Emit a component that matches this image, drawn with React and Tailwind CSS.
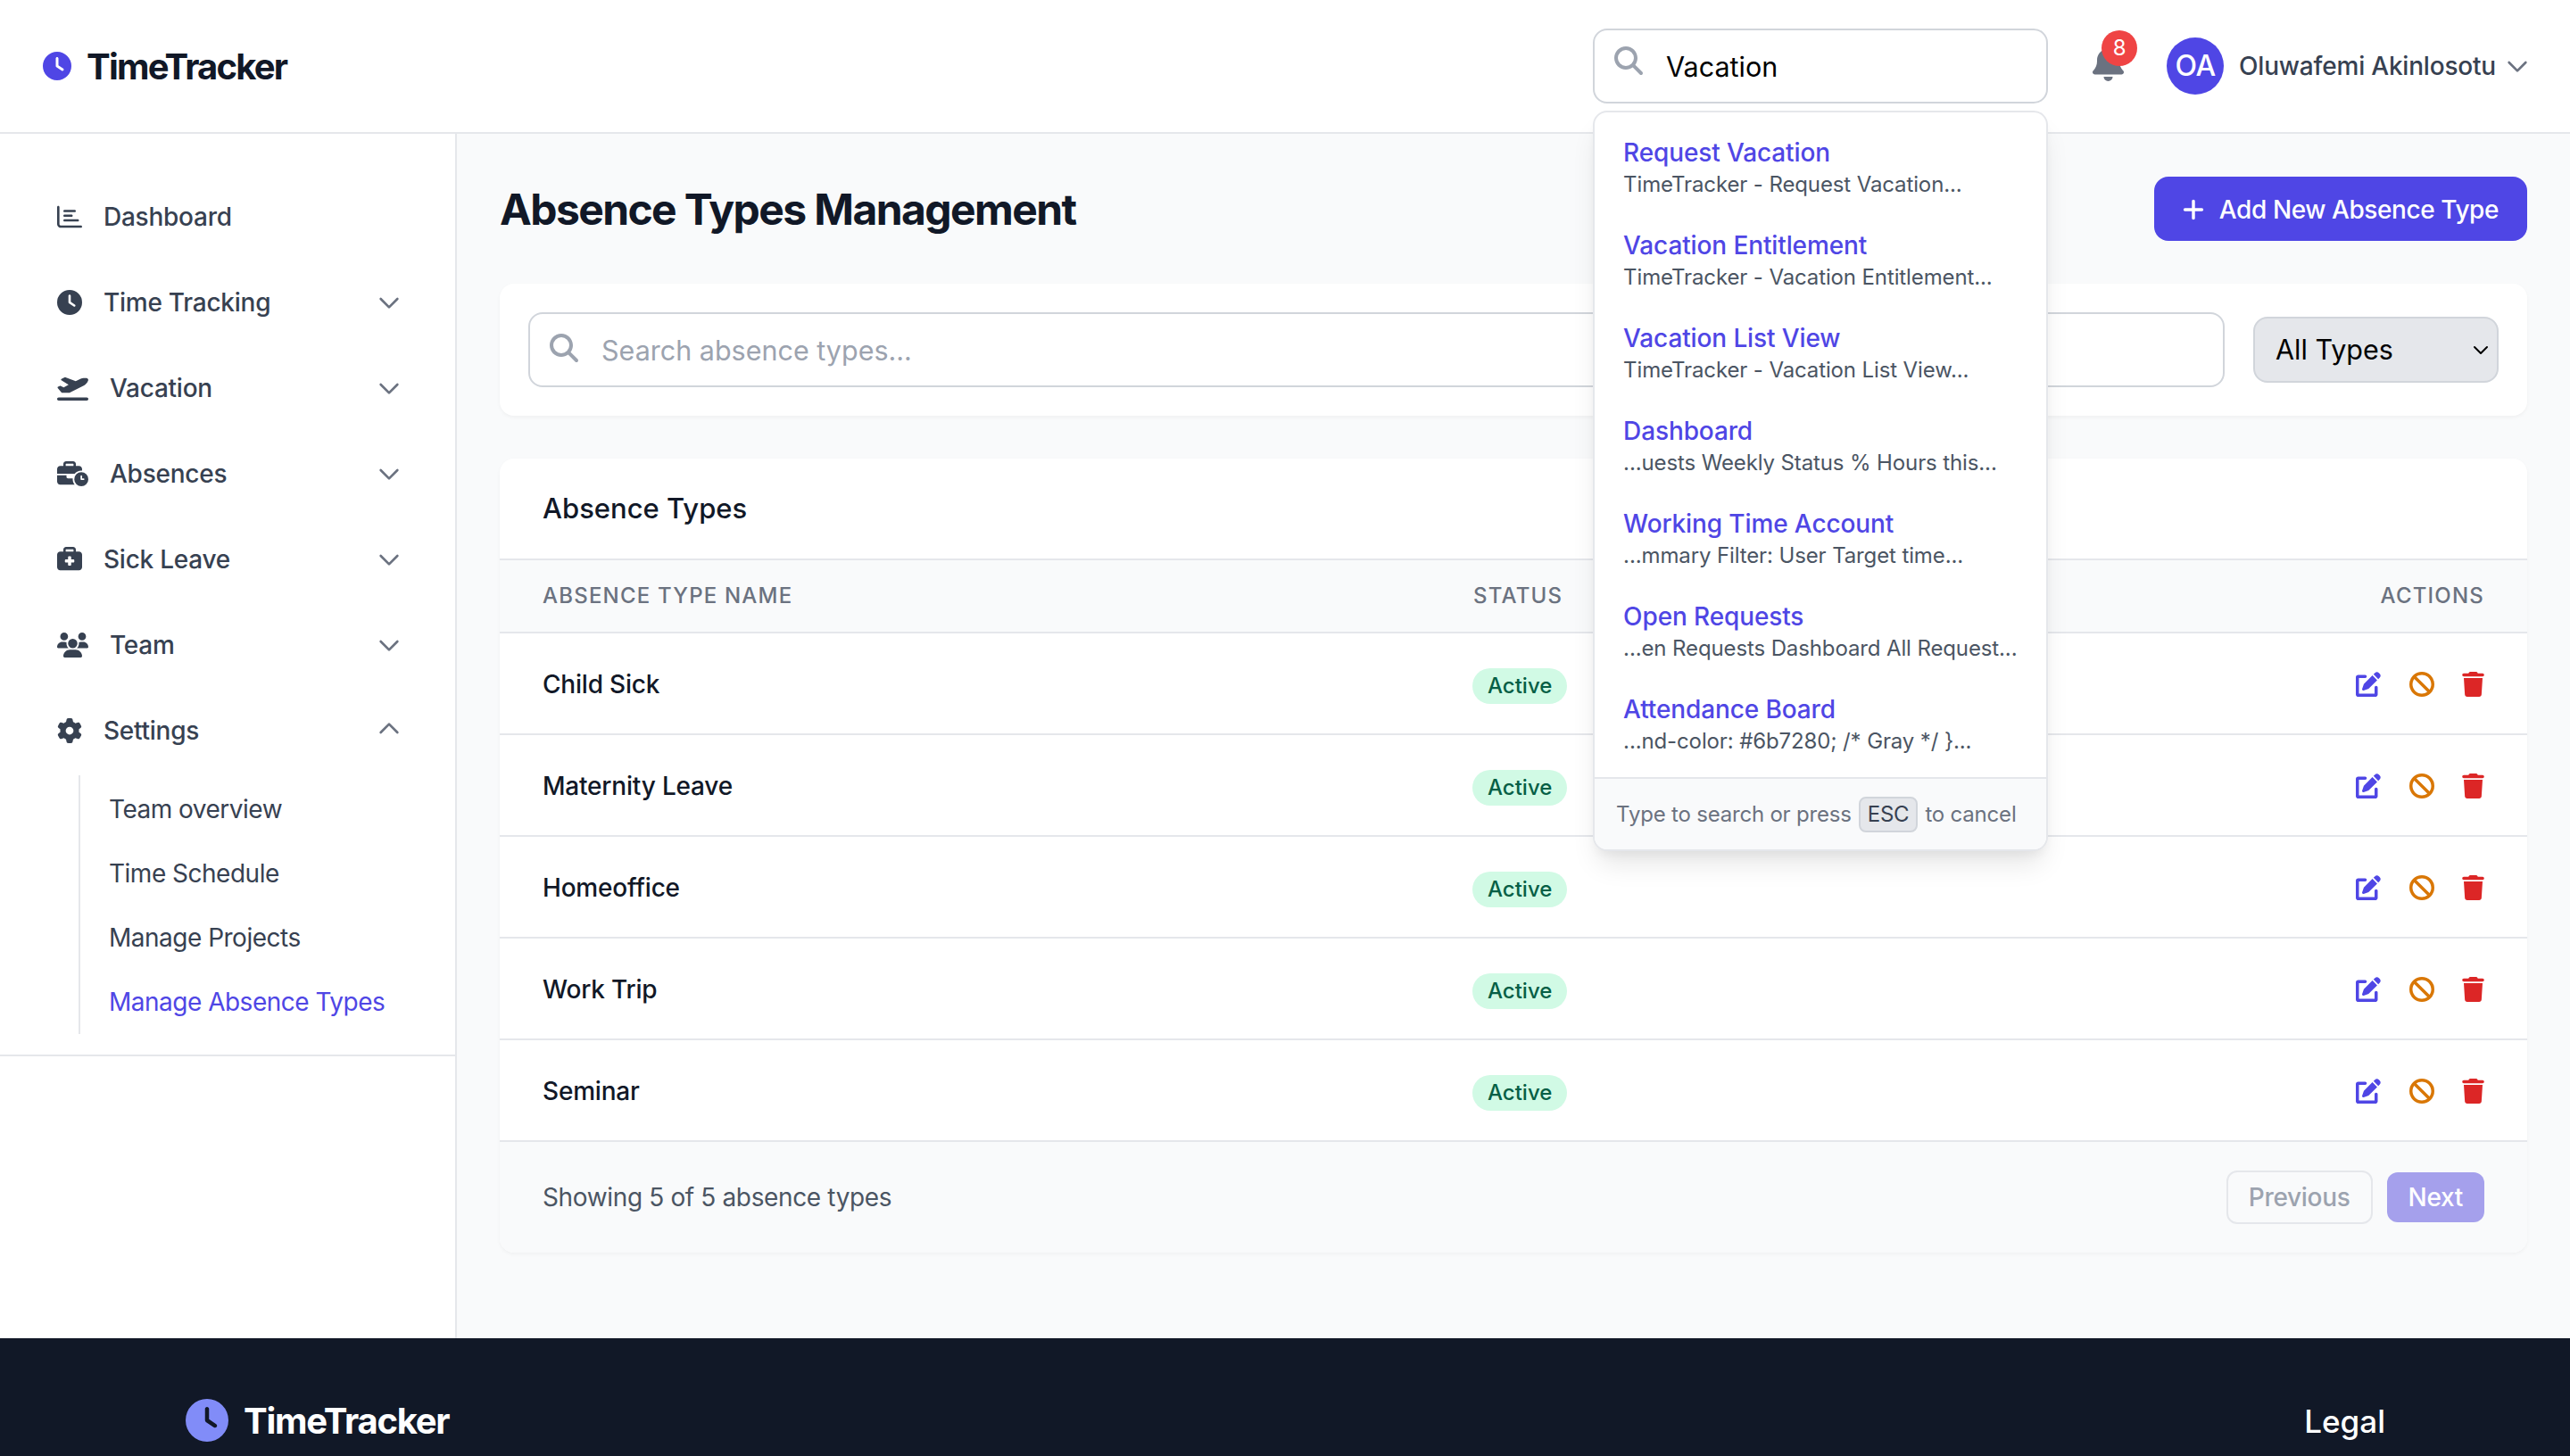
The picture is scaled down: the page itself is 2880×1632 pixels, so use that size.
import React from "react";
import {
  FaBan,
  FaBell,
  FaBriefcaseMedical,
  FaBusinessTime,
  FaClock,
  FaGear,
  FaMagnifyingGlass,
  FaPlaneDeparture,
  FaPlus,
  FaRegChartBar,
  FaTrash,
  FaUsers,
} from "react-icons/fa6";

const navItems = [
  { label: "Dashboard", icon: FaRegChartBar, iconClass: "h-7 w-7" },
  { label: "Time Tracking", icon: FaClock, iconClass: "h-7 w-7", chevron: "down" },
  { label: "Vacation", icon: FaPlaneDeparture, iconClass: "h-7 w-[35px]", chevron: "down" },
  { label: "Absences", icon: FaBusinessTime, iconClass: "h-7 w-[35px]", chevron: "down" },
  { label: "Sick Leave", icon: FaBriefcaseMedical, iconClass: "h-7 w-7", chevron: "down" },
  { label: "Team", icon: FaUsers, iconClass: "h-7 w-[35px]", chevron: "down" },
  { label: "Settings", icon: FaGear, iconClass: "h-7 w-7", chevron: "up" },
];

const subItems = ["Team overview", "Time Schedule", "Manage Projects", "Manage Absence Types"];

const searchResults = [
  { title: "Request Vacation", text: "TimeTracker - Request Vacation..." },
  { title: "Vacation Entitlement", text: "TimeTracker - Vacation Entitlement..." },
  { title: "Vacation List View", text: "TimeTracker - Vacation List View..." },
  { title: "Dashboard", text: "...uests Weekly Status % Hours this..." },
  { title: "Working Time Account", text: "...mmary Filter: User Target time..." },
  { title: "Open Requests", text: "...en Requests Dashboard All Request..." },
  { title: "Attendance Board", text: "...nd-color: #6b7280; /* Gray */ }..." },
];

const absenceTypes = ["Child Sick", "Maternity Leave", "Homeoffice", "Work Trip", "Seminar"];

function Chevron({ up, className }) {
  return (
    <svg viewBox="0 0 24 24" fill="none" stroke="currentColor" strokeWidth="2" className={className}>
      <path strokeLinecap="round" strokeLinejoin="round" d={up ? "M5 15l7-7 7 7" : "M19 9l-7 7-7-7"} />
    </svg>
  );
}

// square with tight corners, the packaged pen-to-square is rounder than the picture
function EditIcon({ className }) {
  return (
    <svg viewBox="0 0 512 512" fill="currentColor" className={className}>
      <path d="M471.6 21.7c-21.9-21.9-57.3-21.9-79.2 0L362.3 51.7l97.9 97.9 30.1-30.1c21.9-21.9 21.9-57.3 0-79.2L471.6 21.7zm-299.2 220c-6.1 6.1-10.8 13.6-13.5 21.9l-29.6 88.8c-2.9 8.6-.6 18.1 5.8 24.6s15.9 8.7 24.6 5.8l88.8-29.6c8.2-2.7 15.7-7.4 21.9-13.5L437.7 172.3 339.7 74.3 172.4 241.7z" />
      <path d="M48 64C21.5 64 0 85.5 0 112V464c0 26.5 21.5 48 48 48H400c26.5 0 48-21.5 48-48V320c0-17.7-14.3-32-32-32s-32 14.3-32 32V448H64V128H192c17.7 0 32-14.3 32-32s-14.3-32-32-32H48z" />
    </svg>
  );
}

function Header() {
  return (
    <header className="flex h-[150px] shrink-0 items-center justify-between border-b-2 border-[#e5e7eb] bg-white px-12">
      <div className="flex items-center gap-[17px]">
        <FaClock className="h-8 w-8 text-[#4f46e5]" />
        <span className="mt-[1px] text-[40px] font-bold tracking-[-1.8px] text-[#111827]">TimeTracker</span>
      </div>

      <div className="-mr-[5px] flex items-center">
        {/* Global search with open results */}
        <div className="relative w-[510px]">
          <FaMagnifyingGlass className="absolute left-6 top-5 h-8 w-8 text-[#9ca3af]" />
          <input
            readOnly
            value="Vacation"
            className="h-[84px] w-full rounded-2xl border-2 border-[#d1d5db] bg-white pl-20 pr-6 text-[30.5px] text-black outline-none"
          />
          <div className="absolute left-0 top-[92px] z-10 w-full overflow-hidden rounded-2xl border-2 border-[#e5e7eb] bg-white shadow-[0_20px_30px_-6px_rgba(0,0,0,0.1),0_8px_12px_-4px_rgba(0,0,0,0.05)]">
            <div className="pb-2 pt-[9px]">
              {searchResults.map((r) => (
                <div key={r.title} className="h-[104px] px-8 py-4">
                  <div className="text-[28px] leading-10 font-medium tracking-[-0.12px] text-[#4f46e5]">{r.title}</div>
                  <div className="whitespace-nowrap text-2xl leading-8 tracking-[-0.12px] text-[#4b5563]">{r.text}</div>
                </div>
              ))}
            </div>
            <div className="flex h-[81px] items-center whitespace-nowrap border-t-2 border-[#e5e7eb] bg-[#f9fafb] px-6 text-2xl tracking-[-0.2px] text-[#6b7280]">
              Type to search or press
              <span className="mx-2 rounded-lg border-2 border-[#d1d5db] bg-[#e5e7eb] px-2 py-[2px] text-[#374151]">ESC</span>
              to cancel
            </div>
          </div>
        </div>

        <div className="relative ml-[50px] mr-12">
          <FaBell className="mt-[-6px] h-10 w-[35px] text-[#6b7280]" />
          <span className="absolute -right-[15px] -top-[23px] flex h-10 w-10 items-center justify-center rounded-full bg-[#ef4444] text-2xl text-white">
            8
          </span>
        </div>

        <div className="flex h-16 w-16 items-center justify-center rounded-full bg-[#4f46e5] text-[32px] font-medium tracking-[-0.5px] text-white">
          OA
        </div>
        <span className="ml-[17px] text-[28px] font-medium tracking-[-0.2px] text-[#374151]">Oluwafemi Akinlosotu</span>
        <Chevron className="ml-2 h-8 w-8 text-[#6b7280]" />
      </div>
    </header>
  );
}

function Sidebar() {
  return (
    <aside className="w-[512px] shrink-0 border-r-2 border-[#e5e7eb] bg-white">
      <div className="border-b-2 border-[#e5e7eb] pb-[23px] pt-[45px]">
        {navItems.map((item) => (
          <div key={item.label} className="flex h-24 items-center pl-16 pr-[58px]">
            <item.icon className={`${item.iconClass} mr-6 shrink-0 text-[#374151]`} />
            <span className="flex-1 text-[28px] font-medium tracking-[-0.25px] text-[#374151]">{item.label}</span>
            {item.chevron === "down" && <Chevron className="h-8 w-8 text-[#6b7280]" />}
            {item.chevron === "up" && <Chevron up className="-mt-1 h-8 w-8 text-[#6b7280]" />}
          </div>
        ))}
        <div className="ml-[88px] mt-[2px] border-l-2 border-[#e5e7eb] pt-[2px]">
          {subItems.map((s, i) => (
            <div
              key={s}
              className={
                i === 3
                  ? "flex h-[72px] items-center pl-8 text-[28px] tracking-[-0.5px] text-[#4f46e5]"
                  : "flex h-[72px] items-center pl-8 text-[28px] tracking-[-0.5px] text-[#374151]"
              }
            >
              {s}
            </div>
          ))}
        </div>
      </div>
    </aside>
  );
}

function FilterCard() {
  return (
    <div className="mt-12 flex h-[148px] items-center gap-8 rounded-2xl bg-white px-8 shadow-[0_2px_4px_rgba(0,0,0,0.04)]">
      <div className="relative flex-1">
        <FaMagnifyingGlass className="absolute left-6 top-6 h-8 w-8 text-[#9ca3af]" />
        <input
          placeholder="Search absence types..."
          className="h-[84px] w-full rounded-2xl border-2 border-[#d1d5db] bg-white pl-20 pr-6 text-[30.5px] outline-none placeholder:text-[#9ca3af]"
        />
      </div>
      <div className="relative">
        <select className="h-[74px] w-[275px] appearance-none rounded-2xl border-2 border-[#d1d5db] bg-[#e5e7eb] pl-[23px] text-[30.5px] text-black outline-none">
          <option>All Types</option>
        </select>
        <Chevron className="absolute right-2 top-[25px] h-6 w-6 text-black" />
      </div>
    </div>
  );
}

function TableCard() {
  return (
    <div className="mt-12 overflow-hidden rounded-2xl bg-white shadow-[0_2px_4px_rgba(0,0,0,0.04)]">
      <div className="flex h-[114px] items-center border-b-2 border-[#e5e7eb] px-12 text-[31px] font-medium text-[#111827]">
        Absence Types
      </div>
      <div className="flex h-[82px] items-center border-b-2 border-[#e5e7eb] bg-[#f9fafb] px-12 text-2xl font-medium uppercase tracking-[0.05em] text-[#6b7280]">
        <span className="w-[1043px]">Absence Type Name</span>
        <span className="flex-1">Status</span>
        <span>Actions</span>
      </div>
      {absenceTypes.map((name) => (
        <div key={name} className="flex h-[114px] items-center border-b-2 border-[#e5e7eb] px-12">
          <span className="mt-[2px] w-[1042px] text-[28px] font-medium tracking-[-0.2px] text-[#111827]">{name}</span>
          <div className="flex-1">
            <span className="mt-[6px] inline-block rounded-full bg-[#d1fae5] px-[17px] py-1 text-2xl font-medium text-[#065f46]">
              Active
            </span>
          </div>
          <div className="mt-[1px] flex items-center">
            <EditIcon className="h-7 w-7 text-[#4f46e5]" />
            <FaBan className="ml-8 h-7 w-7 text-[#d97706]" />
            <FaTrash className="ml-[31px] h-7 w-[25px] text-[#dc2626]" />
          </div>
        </div>
      ))}
      <div className="flex h-[124px] items-center justify-between bg-[#f9fafb] px-12">
        <span className="text-[28px] tracking-[-0.36px] text-[#4b5563]">Showing 5 of 5 absence types</span>
        <div className="flex items-center gap-4">
          <button className="h-[60px] rounded-xl border-2 border-[#e5e7eb] px-[23px] text-[28px] font-medium tracking-[-0.3px] text-[#9ca3af]">
            Previous
          </button>
          <button className="h-14 rounded-xl bg-[#a5a0ec] px-6 text-[28px] font-medium tracking-[-0.3px] text-white">Next</button>
        </div>
      </div>
    </div>
  );
}

export default function App() {
  return (
    <div className="flex h-screen flex-col overflow-hidden bg-[#f9fafb] font-['Inter',sans-serif]">
      <Header />
      <div className="flex min-h-0 flex-1">
        <Sidebar />
        <main className="min-w-0 flex-1 px-12 pt-12">
          <div className="flex h-[72px] items-center justify-between">
            <h1 className="mt-[2px] text-5xl font-bold tracking-[-1.6px] text-[#111827]">Absence Types Management</h1>
            <button className="flex h-[72px] items-center gap-[17px] rounded-2xl bg-[#4f46e5] px-8 pt-[2px] text-[28px] font-medium tracking-[-0.42px] text-white">
              <FaPlus className="h-7 w-6" />
              Add New Absence Type
            </button>
          </div>
          <FilterCard />
          <TableCard />
        </main>
      </div>
      <footer className="flex h-[132px] shrink-0 justify-between bg-[#111827] pl-[208px] pr-[207px] pt-[68px]">
        <div className="flex h-12 items-center gap-[17px]">
          <FaClock className="h-12 w-12 text-[#818cf8]" />
          <span className="mt-[1px] text-[40px] font-bold tracking-[-1.25px] text-white">TimeTracker</span>
        </div>
        <span className="mt-[5px] text-[35px] leading-10 font-medium text-white">Legal</span>
      </footer>
    </div>
  );
}
